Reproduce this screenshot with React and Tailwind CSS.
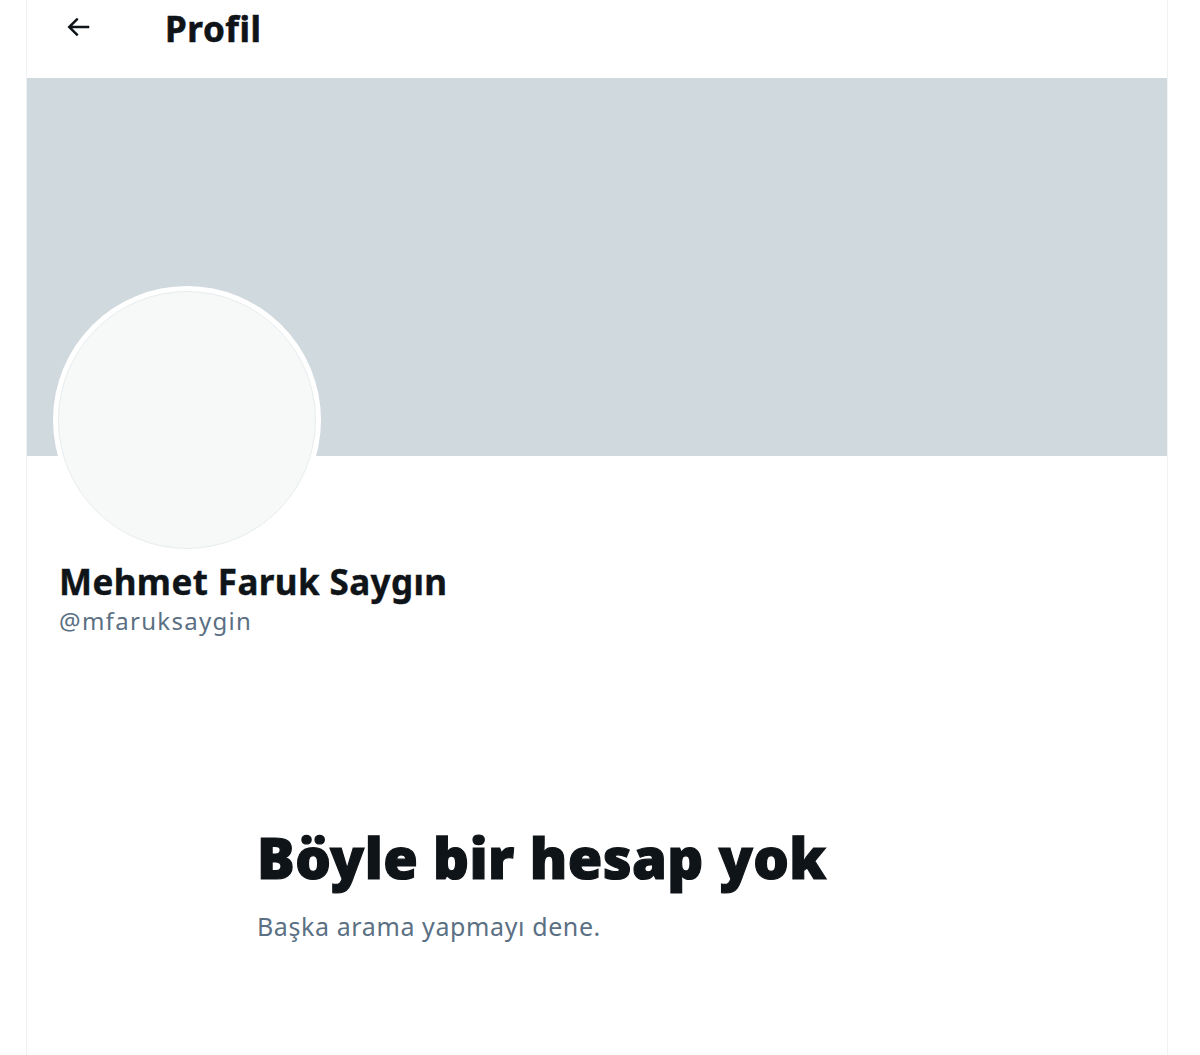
import React from "react";

function BackArrow() {
  return (
    <svg viewBox="0 0 24 24" className="w-[30px] h-[30px]" fill="#0f1419">
      <path d="M7.414 13l5.043 5.04-1.414 1.42L3.586 12l7.457-7.46 1.414 1.42L7.414 11H21v2H7.414z" />
    </svg>
  );
}

export default function App() {
  return (
    <div className="w-[1200px] h-[1055px] bg-white overflow-hidden" style={{ fontFamily: '"Noto Sans", "Open Sans", sans-serif' }}>
      <div className="ml-[26px] w-[1142px] h-full border-x border-[#eff3f4] flex flex-col">
        {/* header */}
        <div className="h-[78px] flex items-start pt-[7px]">
          <div className="w-[138px] pl-[36px] pt-[5px]">
            <BackArrow />
          </div>
          <h1 className="text-[35px] font-bold text-[#0f1419] leading-[44px] tracking-[0.6px] [-webkit-text-stroke:0.6px_#0f1419]">Profil</h1>
        </div>

        {/* banner */}
        <div className="h-[378px] bg-[#cfd9de]"></div>

        {/* profile info */}
        <div className="px-[26px]">
          <div className="-mt-[170px] w-[268px] h-[268px] rounded-full bg-white p-[5px]">
            <div className="w-full h-full rounded-full bg-[#f7f9f9] border border-[#e7ecee]"></div>
          </div>
          <div className="mt-[6px] pl-[6px]">
            <div className="text-[35px] font-bold text-[#0f1419] leading-[44px] tracking-[0.4px] [-webkit-text-stroke:0.4px_#0f1419]">Mehmet Faruk Saygın</div>
            <div className="text-[24px] text-[#5b7083] leading-[34px] tracking-[1.3px]">@mfaruksaygin</div>
          </div>
        </div>

        {/* empty state */}
        <div className="pl-[230px] mt-[186px]">
          <div className="text-[56px] font-black text-[#0f1419] leading-[66px] tracking-[0.4px] [-webkit-text-stroke:1.2px_#0f1419]">Böyle bir hesap yok</div>
          <div className="mt-[20px] text-[25px] text-[#5b7083] leading-[32px] tracking-[0.6px]">Başka arama yapmayı dene.</div>
        </div>
      </div>
    </div>
  );
}
